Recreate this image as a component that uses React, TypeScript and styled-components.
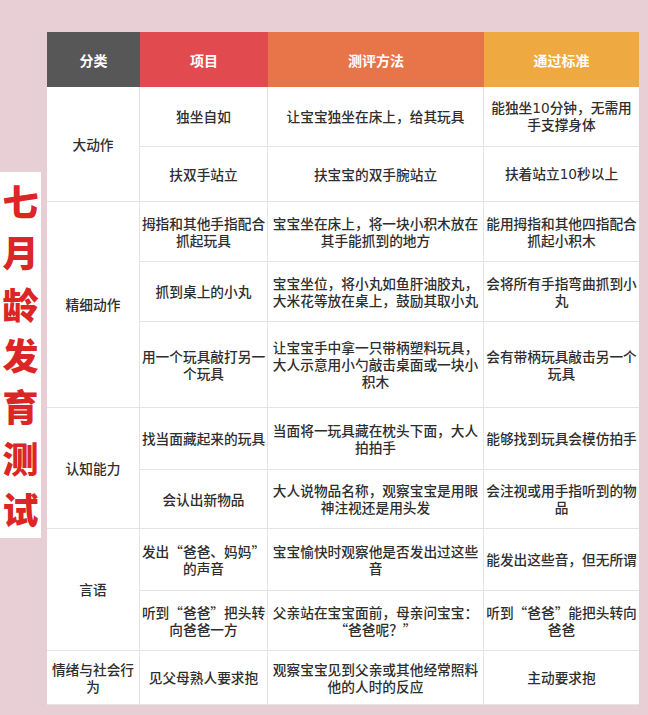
import React from 'react';
import styled, { createGlobalStyle } from 'styled-components';

const GlobalStyle = createGlobalStyle`
  html, body {
    margin: 0;
    padding: 0;
    background: #e8cfd5;
  }
  body {
    font-family: "Noto Sans CJK SC", "Noto Sans", sans-serif;
  }
`;

type Row = {
  category?: string;
  span?: number;
  height: number;
  item: string;
  method: string;
  standard: string;
};

// \u200B lets the line break next to the curly quotes the way the original does
const rows: Row[] = [
  { category: '大动作', span: 2, height: 60, item: '独坐自如', method: '让宝宝独坐在床上，给其玩具', standard: '能独坐10分钟，无需用手支撑身体' },
  { height: 55, item: '扶双手站立', method: '扶宝宝的双手腕站立', standard: '扶着站立10秒以上' },
  { category: '精细动作', span: 3, height: 60, item: '拇指和其他手指配合抓起玩具', method: '宝宝坐在床上，将一块小积木放在其手能抓到的地方', standard: '能用拇指和其他四指配合抓起小积木' },
  { height: 60, item: '抓到桌上的小丸', method: '宝宝坐位，将小丸如鱼肝油胶丸，大米花等放在桌上，鼓励其取小丸', standard: '会将所有手指弯曲抓到小丸' },
  { height: 86, item: '用一个玩具敲打另一个玩具', method: '让宝宝手中拿一只带柄塑料玩具，大人示意用小勺敲击桌面或一块小积木', standard: '会有带柄玩具敲击另一个玩具' },
  { category: '认知能力', span: 2, height: 62, item: '找当面藏起来的玩具', method: '当面将一玩具藏在枕头下面，大人拍拍手', standard: '能够找到玩具会模仿拍手' },
  { height: 59, item: '会认出新物品', method: '大人说物品名称，观察宝宝是用眼神注视还是用头发', standard: '会注视或用手指听到的物品' },
  { category: '言语', span: 2, height: 62, item: '发出“爸爸、妈妈”\u200B的声音', method: '宝宝愉快时观察他是否发出过这些音', standard: '能发出这些音，但无所谓' },
  { height: 60, item: '听到“爸爸”把头转向爸爸一方', method: '父亲站在宝宝面前，母亲问宝宝：\u200B“爸爸呢？”', standard: '听到“爸爸”能把头转向爸爸' },
  { category: '情绪与社会行为', span: 1, height: 54, item: '见父母熟人要求抱', method: '观察宝宝见到父亲或其他经常照料他的人时的反应', standard: '主动要求抱' },
];

const headers = [
  { label: '分类', color: '#575757' },
  { label: '项目', color: '#e14b4f' },
  { label: '测评方法', color: '#e8744a' },
  { label: '通过标准', color: '#eeaa40' },
];

const Page = styled.div`
  display: flex;
  align-items: flex-start;
  gap: 6px;
  padding-top: 32px;
  height: 715px;
  box-sizing: border-box;
`;

const TitleStrip = styled.div`
  margin-top: 140px;
  width: 41px;
  height: 366px;
  background: #fff;
  display: flex;
  flex-direction: column;
  align-items: center;
  justify-content: space-around;
  padding: 2px 0 4px;
  box-sizing: border-box;
`;

const TitleChar = styled.span`
  font-size: 36px;
  font-weight: 900;
  color: #dc2626;
  line-height: 1;
`;

const Table = styled.div<{ $rows: string }>`
  width: 592px;
  display: grid;
  grid-template-columns: 93px 128px 216px 155px;
  grid-template-rows: 55px ${({ $rows }) => $rows};
  background: #fff;
`;

const HeadCell = styled.div<{ $bg: string }>`
  background: ${({ $bg }) => $bg};
  color: #fff;
  font-size: 14px;
  font-weight: 700;
  display: flex;
  align-items: center;
  justify-content: center;
`;

const Cell = styled.div<{ $span?: number; $last?: boolean; $digits?: boolean }>`
  grid-row: ${({ $span }) => ($span ? `span ${$span}` : 'auto')};
  border-right: ${({ $last }) => ($last ? 'none' : '1px solid #e4e4e4')};
  border-bottom: 1px solid #e4e4e4;
  display: flex;
  align-items: center;
  justify-content: center;
  text-align: center;
  font-family: ${({ $digits }) =>
    $digits ? '"DejaVu Sans", "Noto Sans CJK SC", sans-serif' : 'inherit'};
  font-size: 13.7px;
  font-weight: 500;
  line-height: 17px;
  color: #2e2e2e;
  padding: ${({ $last }) => ($last ? '0 1px' : '0')};
  box-sizing: border-box;
`;

const App = () => {
  const rowTemplate = rows.map((r) => `${r.height}px`).join(' ');
  return (
    <>
      <GlobalStyle />
      <Page>
        <TitleStrip>
          {'七月龄发育测试'.split('').map((c, i) => (
            <TitleChar key={i}>{c}</TitleChar>
          ))}
        </TitleStrip>
        <Table $rows={rowTemplate} lang="zh-CN">
          {headers.map((h) => (
            <HeadCell key={h.label} $bg={h.color}>
              {h.label}
            </HeadCell>
          ))}
          {rows.map((r, i) => (
            <React.Fragment key={i}>
              {r.category && <Cell $span={r.span}>{r.category}</Cell>}
              <Cell>{r.item}</Cell>
              <Cell>{r.method}</Cell>
              <Cell $last $digits={/\d/.test(r.standard)}>
                {r.standard}
              </Cell>
            </React.Fragment>
          ))}
        </Table>
      </Page>
    </>
  );
};

export default App;
